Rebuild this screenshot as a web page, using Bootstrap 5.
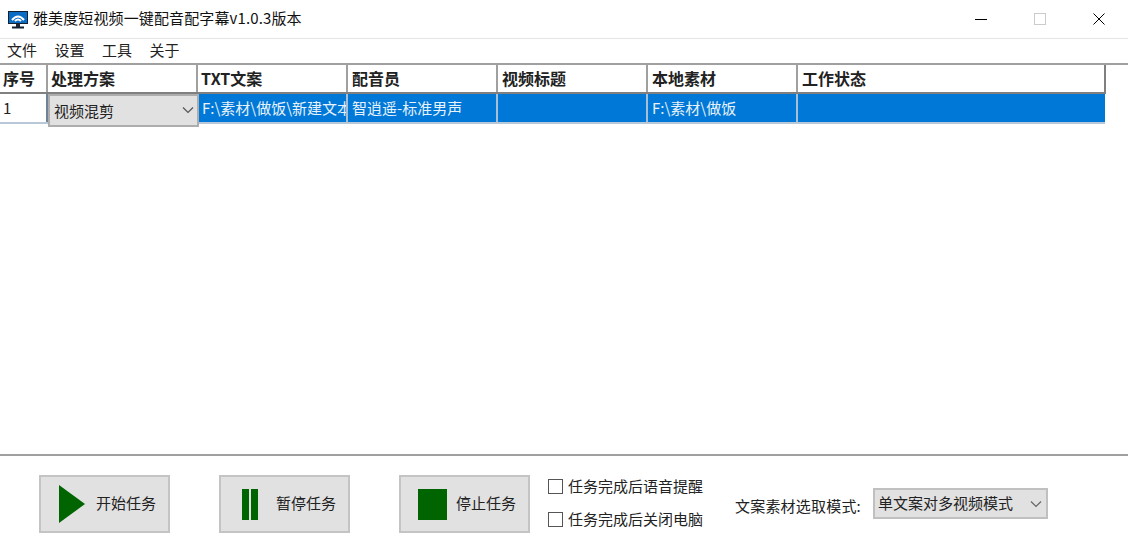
<!DOCTYPE html>
<html lang="zh-CN">
<head>
<meta charset="utf-8">
<title>雅美度短视频一键配音配字幕</title>
<link href="https://cdn.jsdelivr.net/npm/bootstrap@5.3.0/dist/css/bootstrap.min.css" rel="stylesheet">
<style>
html,body{height:546px;overflow:hidden;background:#fff}
body{font-family:"Noto Sans CJK SC","Liberation Sans",sans-serif;font-size:15px;color:#222;width:1128px}
.titlebar{height:39px;border-bottom:1px solid #e5e5e5;padding-left:8px}
.appicon{width:20px;height:18px;margin-right:5px;margin-top:1px}
.apptitle{font-size:15px;line-height:20px;color:#111;letter-spacing:.12px;margin-bottom:3px}
.winctl{width:59px;height:38px}
.menubar{height:24px;padding-left:7px;gap:17.5px;line-height:21px;font-size:15px}
.gridarea{height:393px;border-top:2px solid #a0a0a0;border-bottom:2px solid #a0a0a0}
.hrow{height:29px;border-bottom:2px solid #808080;width:1106px;border-right:2px solid #808080}
.drow{height:30px;width:1105px;background:#0078d7;color:#e8f2fb;border-bottom:2px solid #b8c8d8;position:relative}
.hcell{font-weight:700;font-size:16px;line-height:26px;padding-left:4px;border-right:2px solid #a0a0a0;white-space:nowrap;overflow:hidden;color:#222}
.dcell{font-size:15px;line-height:27px;padding-left:4px;border-right:2px solid #a7bfd6;white-space:nowrap;overflow:hidden}
.c0{width:48px;flex:none;padding-left:3px}.c1,.c2,.c3,.c4,.c5{width:150px;flex:none}.c6{flex:1 1 0;border-right:0}
.hcell.c1,.hcell.c2{padding-left:3px}
.numcell{background:#fff;color:#222;border-right:2px solid #6f8296;padding-left:3px;line-height:27px;height:28px}
.combo{position:absolute;left:48px;top:0;width:151px;height:33px;background:#e1e1e1;border:2px solid #adadad;font-size:15px;line-height:29px;padding-left:4px;color:#222}
.combo svg{position:absolute;right:3px;top:10px}
.toolbar{padding-top:19px;height:90px}
.actbtn{width:131px;height:58px;flex:none;background:#e1e1e1;border:2px solid #c4c4c4;border-radius:0;font-size:15px;color:#222;padding:0;line-height:1;--bs-btn-hover-bg:#e1e1e1}
.btngap1{margin-left:39px}.btngap2{margin-left:49px}.btngap3{margin-left:49px}
.iconbox{width:55px;flex:none;padding-left:3px}
.iconbox.iconshift{padding-left:7px}
.btnlabel{padding-bottom:3px}
.checks{margin-left:19px;margin-top:0;gap:12px}
.chk{padding:0;margin:0;min-height:0;line-height:21px;font-size:15px}
.chk .form-check-input{float:none;width:15px;height:15px;margin:0 5px 0 -1px;border:1.5px solid #555;border-radius:0;vertical-align:-2px}
.modelabel{margin-left:32px;margin-top:21px;line-height:20px;white-space:nowrap;font-size:15px;letter-spacing:.2px}
.modesel{width:175px;height:31px;margin-left:12px;margin-top:13px;padding:0 0 1px 3px;font-size:15px;background-color:#e1e1e1;border:2px solid #c0c0c0;border-radius:0;color:#222;
background-image:url("data:image/svg+xml,%3Csvg xmlns='http://www.w3.org/2000/svg' viewBox='0 0 12 8'%3E%3Cpath d='M1 1.5l5 5 5-5' fill='none' stroke='%23666' stroke-width='1.2'/%3E%3C/svg%3E");background-position:right 4px center;background-size:12px 8px}
</style>
</head>
<body>
<div class="titlebar d-flex align-items-center">
  <svg class="appicon" viewBox="0 0 20 18"><rect x="0.5" y="0.5" width="19" height="12" fill="#0a6cc4" stroke="#123"/><path d="M4 9q6-7 12 0" fill="none" stroke="#fff" stroke-width="2"/><path d="M7 10q3-3 6 0" fill="none" stroke="#fff" stroke-width="2"/><rect x="8" y="13" width="4" height="3" fill="#223"/><rect x="4" y="15.5" width="12" height="2" fill="#123"/></svg>
  <span class="apptitle">雅美度短视频一键配音配字幕v1.0.3版本</span>
  <div class="ms-auto d-flex">
    <div class="winctl d-flex align-items-center justify-content-center"><svg width="12" height="12"><path d="M0 6.5h12" stroke="#000"/></svg></div>
    <div class="winctl d-flex align-items-center justify-content-center"><svg width="12" height="12"><rect x=".5" y=".5" width="11" height="11" fill="none" stroke="#ccc"/></svg></div>
    <div class="winctl d-flex align-items-center justify-content-center"><svg width="12" height="12"><path d="M.5.5l11 11M11.5.5l-11 11" stroke="#000"/></svg></div>
  </div>
</div>
<div class="menubar d-flex"><span>文件</span><span>设置</span><span>工具</span><span>关于</span></div>
<div class="gridarea">
  <div class="hrow d-flex">
    <div class="hcell c0">序号</div><div class="hcell c1">处理方案</div><div class="hcell c2">TXT文案</div><div class="hcell c3">配音员</div><div class="hcell c4">视频标题</div><div class="hcell c5">本地素材</div><div class="hcell c6">工作状态</div>
  </div>
  <div class="drow d-flex">
    <div class="dcell c0 numcell">1</div><div class="dcell c1"></div><div class="dcell c2">F:\素材\做饭\新建文本文档</div><div class="dcell c3">智逍遥-标准男声</div><div class="dcell c4"></div><div class="dcell c5">F:\素材\做饭</div><div class="dcell c6"></div>
    <div class="combo">视频混剪<svg width="12" height="8" viewBox="0 0 12 8"><path d="M1 1.5l5 5 5-5" fill="none" stroke="#555" stroke-width="1.2"/></svg></div>
  </div>
</div>
<div class="toolbar d-flex">
  <button type="button" class="btn actbtn btngap1 d-flex align-items-center"><span class="iconbox iconshift d-flex justify-content-center"><svg width="28" height="38" viewBox="0 0 28 38"><path d="M1 0l26 19L1 38z" fill="#006400"/></svg></span><span class="btnlabel">开始任务</span></button>
  <button type="button" class="btn actbtn btngap2 d-flex align-items-center"><span class="iconbox d-flex justify-content-center"><svg width="16" height="31" viewBox="0 0 16 31"><path d="M0 0h7v31H0zM9 0h7v31H9z" fill="#006400"/></svg></span><span class="btnlabel">暂停任务</span></button>
  <button type="button" class="btn actbtn btngap3 d-flex align-items-center"><span class="iconbox iconshift d-flex justify-content-center"><svg width="29" height="31" viewBox="0 0 29 31"><path d="M0 0h29v31H0z" fill="#006400"/></svg></span><span class="btnlabel">停止任务</span></button>
  <div class="checks d-flex flex-column">
    <label class="form-check chk"><input class="form-check-input" type="checkbox">任务完成后语音提醒</label>
    <label class="form-check chk"><input class="form-check-input" type="checkbox">任务完成后关闭电脑</label>
  </div>
  <span class="modelabel">文案素材选取模式:</span>
  <select class="form-select modesel"><option>单文案对多视频模式</option></select>
</div>
<script src="https://cdn.jsdelivr.net/npm/bootstrap@5.3.0/dist/js/bootstrap.bundle.min.js"></script>
</body>
</html>
